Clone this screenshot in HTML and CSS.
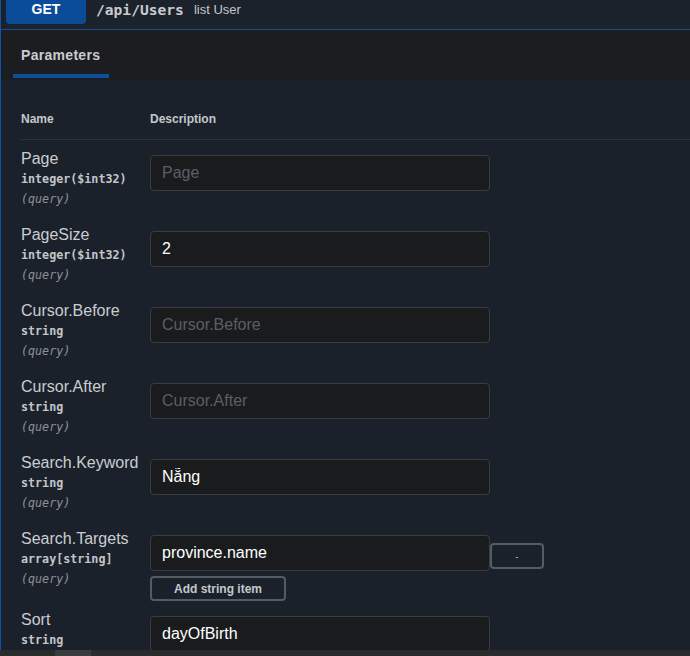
FILE: index.html
```html
<!DOCTYPE html>
<html>
<head>
<meta charset="utf-8">
<link rel="stylesheet" href="styles.css">
</head>
<body>
<div class="frame">
  <div class="viewport">
    <div class="opblock">
      <div class="summary">
        <span class="method">GET</span>
        <span class="path">/api/Users</span>
        <span class="desc">list User</span>
      </div>
      <div class="tabs">
        <div class="tab">Parameters</div>
      </div>
      <div class="params">
        <div class="thead">
          <div class="col-name">Name</div>
          <div class="col-desc">Description</div>
        </div>

        <div class="row">
          <div class="name-cell">
            <div class="pname">Page</div>
            <div class="ptype">integer($int32)</div>
            <div class="pin">(query)</div>
          </div>
          <div class="val-cell">
            <input class="field" type="text" placeholder="Page">
          </div>
        </div>

        <div class="row">
          <div class="name-cell">
            <div class="pname">PageSize</div>
            <div class="ptype">integer($int32)</div>
            <div class="pin">(query)</div>
          </div>
          <div class="val-cell">
            <input class="field" type="text" placeholder="PageSize" value="2">
          </div>
        </div>

        <div class="row">
          <div class="name-cell">
            <div class="pname">Cursor.Before</div>
            <div class="ptype">string</div>
            <div class="pin">(query)</div>
          </div>
          <div class="val-cell">
            <input class="field" type="text" placeholder="Cursor.Before">
          </div>
        </div>

        <div class="row">
          <div class="name-cell">
            <div class="pname">Cursor.After</div>
            <div class="ptype">string</div>
            <div class="pin">(query)</div>
          </div>
          <div class="val-cell">
            <input class="field" type="text" placeholder="Cursor.After">
          </div>
        </div>

        <div class="row">
          <div class="name-cell">
            <div class="pname">Search.Keyword</div>
            <div class="ptype">string</div>
            <div class="pin">(query)</div>
          </div>
          <div class="val-cell">
            <input class="field" type="text" placeholder="Search.Keyword" value="Nẵng">
          </div>
        </div>

        <div class="row">
          <div class="name-cell">
            <div class="pname">Search.Targets</div>
            <div class="ptype">array[string]</div>
            <div class="pin">(query)</div>
          </div>
          <div class="val-cell">
            <div class="array-item">
              <input class="field" type="text" value="province.name">
              <button class="btn-remove">-</button>
            </div>
            <button class="btn-add">Add string item</button>
          </div>
        </div>

        <div class="row">
          <div class="name-cell">
            <div class="pname">Sort</div>
            <div class="ptype">string</div>
            <div class="pin">(query)</div>
          </div>
          <div class="val-cell">
            <input class="field" type="text" value="dayOfBirth">
          </div>
        </div>
      </div>
    </div>
  </div>
  <div class="hscroll"><div class="thumb"></div></div>
</div>
</body>
</html>
```
FILE: styles.css
```css
html, body {
  margin: 0;
  padding: 0;
  background: #1b212a;
}

.frame {
  width: 690px;
  height: 656px;
  display: flex;
  flex-direction: column;
  overflow: hidden;
}

.viewport {
  flex: 1;
  overflow: hidden;
}

.opblock {
  border-left: 1px solid #0c55a6;
  background: #1b212a;
  font-family: "Liberation Sans", Arial, sans-serif;
  color: #c9cdd1;
}

.summary {
  height: 29px;
  border-bottom: 1px solid #14508f;
  background: #1c222b;
  display: flex;
  align-items: flex-start;
}

.method {
  width: 80px;
  height: 24px;
  margin-left: 5px;
  background: #0a4c97;
  border-radius: 0 0 4px 4px;
  color: #ffffff;
  font-weight: bold;
  font-size: 14px;
  line-height: 19px;
  text-align: center;
}

.path {
  margin-left: 10px;
  font-family: "DejaVu Sans Mono", monospace;
  font-weight: bold;
  font-size: 14.6px;
  line-height: 20px;
  color: #c8cacd;
}

.desc {
  margin-left: 10px;
  font-size: 13px;
  line-height: 20px;
  color: #c3c7cb;
}

.tabs {
  height: 50px;
  background: #1b1d20;
  padding-left: 12px;
  display: flex;
}

.tab {
  box-sizing: border-box;
  width: 96px;
  padding: 0 0 0 8px;
  height: 48px;
  line-height: 50px;
  font-size: 14px;
  font-weight: bold;
  color: #c9cdd1;
  border-bottom: 4px solid #0d4f9c;
  letter-spacing: 0.3px;
}

.params {
  padding-left: 20px;
}

.thead {
  display: flex;
  padding-top: 32px;
  padding-bottom: 12px;
  border-bottom: 1px solid #2d333c;
  font-size: 12px;
  font-weight: bold;
  line-height: 15px;
  color: #c4c8cc;
}

.col-name {
  width: 129px;
}

.row {
  display: flex;
  align-items: flex-start;
}

.name-cell {
  width: 129px;
  padding: 8px 0 7px;
}

.pname {
  font-size: 16px;
  line-height: 21px;
  color: #c9cdd1;
  white-space: nowrap;
}

.ptype {
  font-family: "DejaVu Sans Mono", monospace;
  font-weight: bold;
  font-size: 11.7px;
  line-height: 20px;
  color: #c2c6ca;
}

.pin {
  font-family: "DejaVu Sans Mono", monospace;
  font-style: italic;
  font-size: 11.7px;
  line-height: 20px;
  color: #8c9197;
}

.val-cell {
  padding-top: 15px;
  display: flex;
  flex-direction: column;
  align-items: flex-start;
}

.field {
  box-sizing: border-box;
  width: 340px;
  height: 36px;
  margin: 0;
  padding: 0 11px;
  background: #1a1b1d;
  border: 1px solid #3a3e44;
  border-radius: 4px;
  font-family: "Liberation Sans", Arial, sans-serif;
  font-size: 16px;
  color: #ffffff;
  outline: none;
}

.field::placeholder {
  color: #5a5f65;
}

.array-item {
  display: flex;
  align-items: center;
}

.btn-remove {
  box-sizing: border-box;
  width: 54px;
  height: 26px;
  margin: 6px 0 0 0;
  padding: 0;
  background: #1b212a;
  border: 2px solid #545b62;
  border-radius: 4px;
  font-family: "Liberation Sans", Arial, sans-serif;
  font-size: 7px;
  font-weight: bold;
  color: #c9cdd1;
}

.btn-add {
  box-sizing: border-box;
  width: 136px;
  height: 25px;
  margin: 5px 0 0 0;
  padding: 0;
  background: #1b212a;
  border: 2px solid #545b62;
  border-radius: 4px;
  font-family: "Liberation Sans", Arial, sans-serif;
  font-size: 12px;
  font-weight: bold;
  color: #c4c8cc;
}

.hscroll {
  height: 6px;
  flex: none;
  background: #2a2b2c;
  display: flex;
}

.thumb {
  margin-left: 55px;
  width: 36px;
  background: #3b3c3e;
}
```
